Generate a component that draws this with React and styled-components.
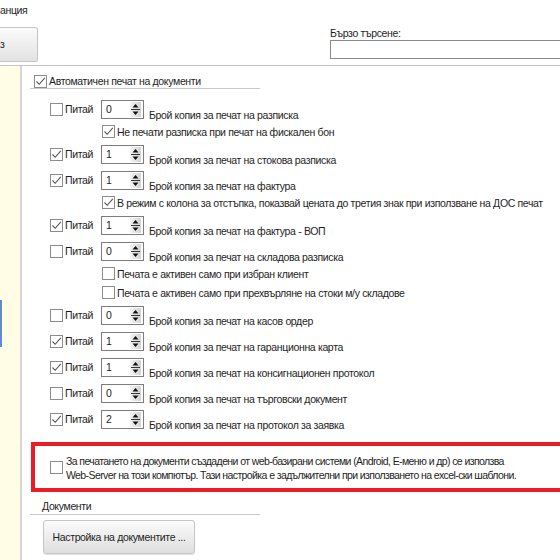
import styled, { createGlobalStyle } from "styled-components";

const Global = createGlobalStyle`
  body {
    margin: 0;
    background: #ffffff;
    font-family: "Liberation Sans", Arial, sans-serif;
    font-size: 10.5px;
    letter-spacing: -0.35px;
    color: #1e1e1e;
  }
`;

const Page = styled.div`
  width: 560px;
  height: 560px;
  overflow: hidden;
  display: flex;
  flex-direction: column;
`;

const Header = styled.div`
  height: 65px;
  border-bottom: 1px solid #c4c4c4;
  display: flex;
  flex-direction: column;
  flex: none;
`;

const Title = styled.div`
  height: 13px;
  line-height: 13px;
  margin-top: 4px;
`;

const HeaderRow = styled.div`
  display: flex;
  margin-top: 10px;
  overflow: hidden;
`;

const TopButton = styled.div`
  width: 37px;
  height: 33px;
  flex: none;
  border: 1px solid #c6c6c6;
  border-left: none;
  border-radius: 0 3px 3px 0;
  background: linear-gradient(#fbfbfb, #e2e2e2);
  box-shadow: 0 1px 1px rgba(0, 0, 0, 0.12);
  display: flex;
  align-items: center;
  line-height: 13px;
`;

const Search = styled.div`
  flex: none;
  margin-left: 292px;
  display: flex;
  flex-direction: column;
`;

const SearchLabel = styled.div`
  height: 13px;
  line-height: 13px;
`;

const SearchInput = styled.div`
  width: 260px;
  height: 17px;
  border: 1px solid #8a8a8a;
  background: #fff;
`;

const Body = styled.div`
  flex: 1;
  display: flex;
  min-height: 0;
`;

const Sidebar = styled.div`
  width: 20px;
  flex: none;
  background: #fffde6;
  border-right: 2px solid #d6d6d6;
  padding-top: 234px;
`;

const SideMarker = styled.div`
  width: 2px;
  height: 47px;
  background: #5f8ad8;
`;

const Main = styled.div`
  flex: 1;
  padding-left: 8px;
  display: flex;
  flex-direction: column;
  min-width: 0;
`;

const SectionHead = styled.div`
  width: 226px;
  height: 14px;
  margin-top: 8px;
  padding-left: 4px;
  border-bottom: 1px solid #c8c8c8;
  display: flex;
  align-items: center;
  gap: 2px;
`;

const List = styled.div`
  margin-top: 7px;
  display: flex;
  flex-direction: column;
`;

const Row = styled.div`
  height: 26px;
  padding-left: 20px;
  display: flex;
  align-items: center;
`;

const AskCell = styled.div`
  width: 51px;
  flex: none;
  display: flex;
  align-items: center;
  gap: 2px;
`;

const Desc = styled.div`
  margin-left: 5px;
  padding-top: 11px;
  white-space: nowrap;
`;

const SubRow = styled.div`
  height: 19px;
  padding-left: 72px;
  display: flex;
  align-items: center;
  gap: 2px;
  white-space: nowrap;
`;

const Box = styled.div`
  width: 11px;
  height: 11px;
  flex: none;
  border: 1px solid #8c8c8c;
  background: #fff;
  display: flex;
  align-items: center;
  justify-content: center;
`;

const Spin = styled.div`
  width: 41px;
  height: 17px;
  flex: none;
  border: 1px solid #7c7c7c;
  background: #fff;
  display: flex;
  align-items: center;
  justify-content: space-between;
`;

const SpinValue = styled.span`
  padding-left: 4px;
  line-height: 13px;
`;

const SpinArrows = styled.svg`
  margin-right: 2px;
`;

const Notice = styled.div`
  margin-top: 10px;
  margin-left: 1px;
  width: 560px;
  height: 42px;
  flex: none;
  border: 4px solid #ea1d25;
  display: flex;
  align-items: center;
  padding-left: 15px;
  gap: 3px;
`;

const NoticeText = styled.div`
  line-height: 14px;
  margin-top: 2px;
  letter-spacing: -0.6px;
  white-space: nowrap;
`;

const DocTitle = styled.div`
  width: 218px;
  height: 17px;
  margin-top: 5px;
  padding-left: 12px;
  border-bottom: 1px solid #c8c8c8;
  display: flex;
  align-items: center;
`;

const DocButton = styled.div`
  width: 150px;
  height: 32px;
  margin-top: 5px;
  margin-left: 13px;
  flex: none;
  border: 1px solid #c6c6c6;
  border-radius: 3px;
  background: linear-gradient(#fbfbfb, #dedede);
  box-shadow: 0 1px 1px rgba(0, 0, 0, 0.12);
  display: flex;
  align-items: center;
  justify-content: center;
  white-space: nowrap;
`;

function Check({ on }) {
  return (
    <Box>
      {on && (
        <svg width="11" height="11" viewBox="0 0 11 11">
          <path d="M1.5 5.5 L4.2 8.3 L9.8 1.8" fill="none" stroke="#555" strokeWidth="1.1" />
        </svg>
      )}
    </Box>
  );
}

function SpinBox({ value }) {
  return (
    <Spin>
      <SpinValue>{value}</SpinValue>
      <SpinArrows width="11" height="15" viewBox="0 0 11 15">
        <defs>
          <linearGradient id="sg" x1="0" x2="1">
            <stop offset="0" stopColor="#f4f4f4" />
            <stop offset="1" stopColor="#d2d2d2" />
          </linearGradient>
        </defs>
        <rect x="0" y="0" width="11" height="15" rx="1" fill="url(#sg)" />
        <path d="M5.5 2 L8.5 5.5 L2.5 5.5 Z" fill="#111" />
        <line x1="1" y1="7.5" x2="10" y2="7.5" stroke="#333" strokeWidth="1" />
        <path d="M2.5 9.5 L8.5 9.5 L5.5 13 Z" fill="#111" />
      </SpinArrows>
    </Spin>
  );
}

const groups = [
  { on: false, n: 0, text: "Брой копия за печат на разписка", subs: [{ on: true, text: "Не печати разписка при печат на фискален бон" }] },
  { on: true, n: 1, text: "Брой копия за печат на стокова разписка" },
  { on: true, n: 1, text: "Брой копия за печат на фактура", subs: [{ on: true, text: "В режим с колона за отстъпка, показвай цената до третия знак при използване на ДОС печат" }] },
  { on: true, n: 1, text: "Брой копия за печат на фактура - ВОП" },
  {
    on: false, n: 0, text: "Брой копия за печат на складова разписка",
    subs: [
      { on: false, text: "Печата е активен само при избран клиент" },
      { on: false, text: "Печата е активен само при прехвърляне на стоки м/у складове" },
    ],
  },
  { on: false, n: 0, text: "Брой копия за печат на касов ордер" },
  { on: true, n: 1, text: "Брой копия за печат на гаранционна карта" },
  { on: true, n: 1, text: "Брой копия за печат на консигнационен протокол" },
  { on: false, n: 0, text: "Брой копия за печат на търговски документ" },
  { on: true, n: 2, text: "Брой копия за печат на протокол за заявка" },
];

export default function App() {
  return (
    <Page>
      <Global />
      <Header>
        <Title>анция</Title>
        <HeaderRow>
          <TopButton>з</TopButton>
          <Search>
            <SearchLabel>Бързо търсене:</SearchLabel>
            <SearchInput />
          </Search>
        </HeaderRow>
      </Header>
      <Body>
        <Sidebar>
          <SideMarker />
        </Sidebar>
        <Main>
          <SectionHead>
            <Check on />
            Автоматичен печат на документи
          </SectionHead>
          <List>
            {groups.map((g, i) => (
              <div key={i}>
                <Row>
                  <AskCell>
                    <Check on={g.on} />
                    Питай
                  </AskCell>
                  <SpinBox value={g.n} />
                  <Desc>{g.text}</Desc>
                </Row>
                {(g.subs || []).map((s, j) => (
                  <SubRow key={j}>
                    <Check on={s.on} />
                    {s.text}
                  </SubRow>
                ))}
              </div>
            ))}
          </List>
          <Notice>
            <Check />
            <NoticeText>
              За печатането на документи създадени от web-базирани системи (Android, Е-меню и др) се използва
              <br />
              Web-Server на този компютър. Тази настройка е задължителни при използването на excel-ски шаблони.
            </NoticeText>
          </Notice>
          <DocTitle>Документи</DocTitle>
          <DocButton>Настройка на документите ...</DocButton>
        </Main>
      </Body>
    </Page>
  );
}
